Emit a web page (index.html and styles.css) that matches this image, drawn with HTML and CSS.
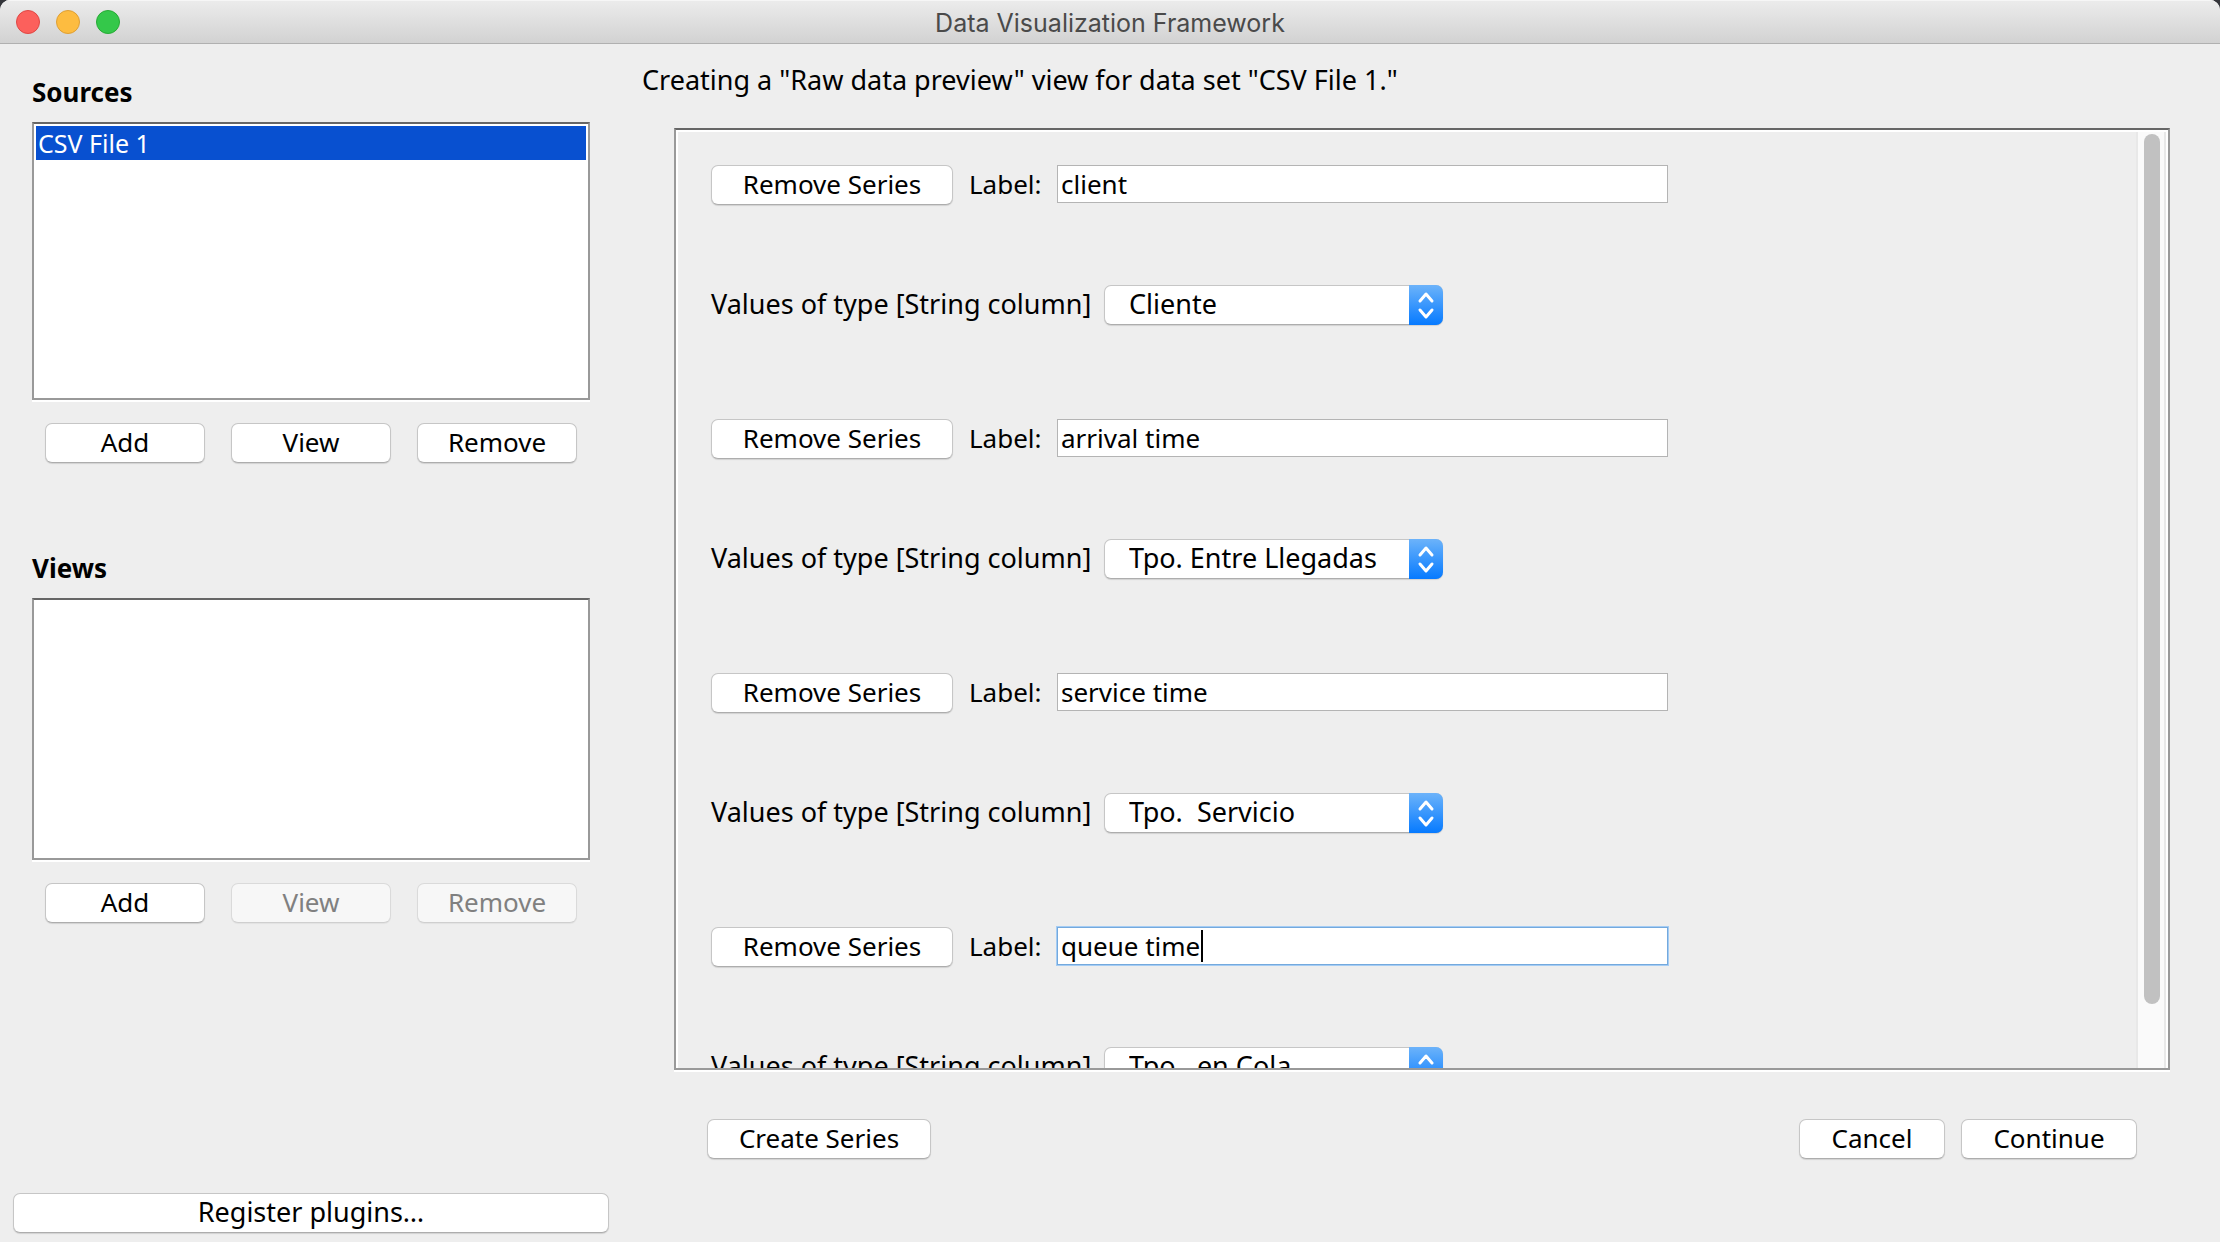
FILE: index.html
```html
<!DOCTYPE html>
<html lang="en">
<head>
<meta charset="utf-8">
<title>Data Visualization Framework</title>
<link rel="stylesheet" href="styles.css">
</head>
<body>
<svg class="sprite" width="0" height="0" aria-hidden="true">
  <symbol id="chevrons" viewBox="0 0 34 40">
    <path d="M11 16l6-7 6 7M11 25l6 7 6-7" fill="none" stroke="#fff" stroke-width="3" stroke-linecap="round" stroke-linejoin="round"/>
  </symbol>
</svg>
<div class="window">
  <header class="titlebar">
    <div class="lights">
      <button class="light close" aria-label="Close"></button>
      <button class="light minimize" aria-label="Minimize"></button>
      <button class="light zoom" aria-label="Zoom"></button>
    </div>
    <h1 class="title">Data Visualization Framework</h1>
  </header>
  <div class="content">
    <aside class="sidebar">
      <section class="group">
        <h2 class="group-title">Sources</h2>
        <ul class="list sources"><li class="item selected">CSV File 1</li></ul>
        <div class="actions">
          <button class="button">Add</button>
          <button class="button">View</button>
          <button class="button">Remove</button>
        </div>
      </section>
      <section class="group">
        <h2 class="group-title">Views</h2>
        <ul class="list views"></ul>
        <div class="actions">
          <button class="button">Add</button>
          <button class="button" disabled>View</button>
          <button class="button" disabled>Remove</button>
        </div>
      </section>
      <button class="button register">Register plugins…</button>
    </aside>
    <main class="main">
      <p class="heading">Creating a "Raw data preview" view for data set "CSV File 1."</p>
      <div class="panel">
        <div class="viewport">
          <section class="series">
            <div class="row">
              <button class="button remove">Remove Series</button>
              <label class="label" for="label1">Label:</label>
              <div class="field"><input class="input" id="label1" type="text" value="client"></div>
            </div>
            <div class="row">
              <label class="type" for="type1">Values of type [String column]</label>
              <div class="combo"><select class="select" id="type1"><option>Cliente</option></select><svg class="arrows"><use href="#chevrons"/></svg></div>
            </div>
          </section>
          <section class="series">
            <div class="row">
              <button class="button remove">Remove Series</button>
              <label class="label" for="label2">Label:</label>
              <div class="field"><input class="input" id="label2" type="text" value="arrival time"></div>
            </div>
            <div class="row">
              <label class="type" for="type2">Values of type [String column]</label>
              <div class="combo"><select class="select" id="type2"><option>Tpo. Entre Llegadas</option></select><svg class="arrows"><use href="#chevrons"/></svg></div>
            </div>
          </section>
          <section class="series">
            <div class="row">
              <button class="button remove">Remove Series</button>
              <label class="label" for="label3">Label:</label>
              <div class="field"><input class="input" id="label3" type="text" value="service time"></div>
            </div>
            <div class="row">
              <label class="type" for="type3">Values of type [String column]</label>
              <div class="combo"><select class="select" id="type3"><option>Tpo.&nbsp; Servicio</option></select><svg class="arrows"><use href="#chevrons"/></svg></div>
            </div>
          </section>
          <section class="series">
            <div class="row">
              <button class="button remove">Remove Series</button>
              <label class="label" for="label4">Label:</label>
              <div class="field active"><input class="input" id="label4" type="text" value="queue time"><span class="caret"></span></div>
            </div>
            <div class="row">
              <label class="type" for="type4">Values of type [String column]</label>
              <div class="combo"><select class="select" id="type4"><option>Tpo.&nbsp; en Cola</option></select><svg class="arrows"><use href="#chevrons"/></svg></div>
            </div>
          </section>
        </div>
        <div class="scrollbar"><div class="thumb"></div></div>
      </div>
      <footer class="footer">
        <button class="button create">Create Series</button>
        <button class="button cancel">Cancel</button>
        <button class="button continue">Continue</button>
      </footer>
    </main>
  </div>
</div>
</body>
</html>
```
FILE: styles.css
```css
* { box-sizing: border-box; }

body {
  margin: 0;
  background: #34353a;
  color: #000;
  font: 26px/36px "Noto Sans", "Open Sans", sans-serif;
}

h1, h2, p, ul { margin: 0; padding: 0; }
button, input, select { font: inherit; color: inherit; margin: 0; }
.sprite { position: absolute; }

.window {
  display: flex;
  flex-direction: column;
  height: 100vh;
  overflow: hidden;
  background: #eee;
  border-radius: 10px 10px 0 0;
}

/* Title bar */
.titlebar {
  display: grid;
  grid-template-columns: 1fr auto 1fr;
  align-items: center;
  flex: none;
  height: 44px;
  padding: 0 16px;
  background: linear-gradient(#ececec, #d2d2d2);
  border-bottom: 1px solid #b0b0b0;
  box-shadow: inset 0 1px #f6f6f6;
}
.lights { display: flex; gap: 16px; }
.light {
  width: 24px;
  height: 24px;
  padding: 0;
  border: 1px solid;
  border-radius: 50%;
}
.close { background: #fc605c; border-color: #df4744; }
.minimize { background: #fdbc40; border-color: #de9f34; }
.zoom { background: #34c84a; border-color: #27aa35; }
.title {
  padding-top: 2px;
  font: 400 25px/32px Inter, "Liberation Sans", sans-serif;
  color: #4a4a4a;
}

/* Push buttons */
.button {
  height: 40px;
  padding: 0 0 2px;
  background: #fff;
  border: 1px solid #c6c6c6;
  border-bottom-color: #adadad;
  border-radius: 7px;
  box-shadow: 0 1px 1px rgba(0, 0, 0, .12);
  line-height: 36px;
  text-align: center;
}
.button:disabled {
  background: #f7f7f7;
  border-color: #dadada;
  border-bottom-color: #cfcfcf;
  box-shadow: 0 1px 1px rgba(0, 0, 0, .05);
  color: #808080;
}

.content { display: flex; flex: 1; min-height: 0; }

/* Sidebar */
.sidebar {
  display: flex;
  flex-direction: column;
  gap: 87px;
  flex: none;
  width: 642px;
  padding: 30px 33px 9px 13px;
}
.group { padding: 0 19px; }
.group-title {
  margin-bottom: 12px;
  font-size: 26px;
  line-height: 36px;
  font-weight: 700;
}
.list {
  padding: 2px;
  list-style: none;
  background: #fff;
  border: 2px solid #999;
  border-top-color: #666;
  box-shadow: 0 2px #fff;
}
.sources { height: 278px; }
.views { height: 262px; }
.item { padding: 0 2px; font-size: 25px; line-height: 34px; }
.selected { background: #0850d0; color: #fff; }
.actions {
  display: grid;
  grid-template-columns: repeat(3, 1fr);
  gap: 26px;
  padding: 23px 13px 0;
}
.register { margin-top: auto; font-size: 27px; }

/* Series editor */
.main {
  display: flex;
  flex-direction: column;
  flex: 1;
  min-width: 0;
  padding: 18px 50px 83px 0;
}
.heading { font-size: 27px; }
.panel {
  display: flex;
  flex: 1;
  min-height: 0;
  margin: 30px 0 0 32px;
  border: 2px solid #999;
  border-top-color: #666;
  box-shadow: inset 2px 2px #fff, inset -2px 0 #fff, 0 2px #fff;
}
.viewport {
  display: flex;
  flex-direction: column;
  gap: 94px;
  flex: 1;
  overflow: hidden;
  padding: 35px 34px 0 35px;
}
.series { display: flex; flex-direction: column; gap: 80px; flex: none; }
.row { display: flex; align-items: center; gap: 16px; height: 40px; white-space: nowrap; }
.remove { width: 242px; }
.label, .type { padding-bottom: 2px; }
.label { width: 72px; }
.type { width: 377px; font-size: 27px; }
.field { position: relative; width: 611px; height: 40px; }
.input {
  display: block;
  width: 100%;
  height: 38px;
  padding: 0 3px;
  background: #fff;
  border: 1px solid #b4b4b4;
  border-radius: 0;
  outline: none;
}
.active .input { border-color: #74a9dd; box-shadow: 0 0 0 1px #a4ccf4; }
.caret {
  position: absolute;
  top: 3px;
  left: 144px;
  width: 2px;
  height: 32px;
  background: #000;
}
.combo { position: relative; width: 339px; height: 40px; }
.select {
  width: 100%;
  height: 40px;
  padding: 0 40px 2px 24px;
  appearance: none;
  background: #fff;
  border: 1px solid #c6c6c6;
  border-bottom-color: #adadad;
  border-radius: 7px;
  box-shadow: 0 1px 1px rgba(0, 0, 0, .12);
  font-size: 27px;
}
.arrows {
  position: absolute;
  top: 0;
  right: 0;
  width: 34px;
  height: 40px;
  pointer-events: none;
  background: linear-gradient(#6cb3fa, #067aff);
  border-radius: 0 7px 7px 0;
}
.scrollbar {
  flex: none;
  width: 30px;
  margin: 2px 2px 0 0;
  padding: 2px 4px 64px 6px;
  background: #fafafa;
  border: solid #e8e8e8;
  border-width: 0 2px;
}
.thumb { height: 100%; border-radius: 8px; background: #c1c1c1; }

.footer {
  display: flex;
  gap: 16px;
  margin-top: 49px;
  padding: 0 33px 0 65px;
}
.create { width: 224px; margin-right: auto; }
.cancel { width: 146px; }
.continue { width: 176px; }
```
